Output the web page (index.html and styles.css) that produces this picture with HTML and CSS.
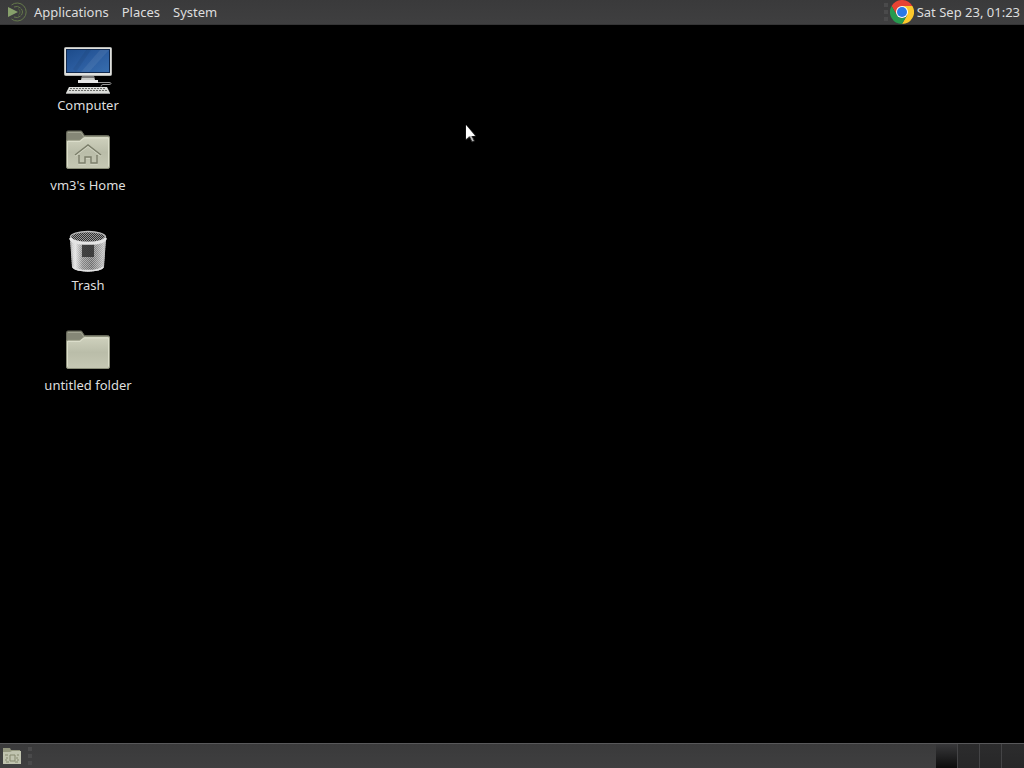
FILE: index.html
```html
<!DOCTYPE html>
<html lang="en">
<head>
<meta charset="utf-8">
<title>Desktop</title>
<link rel="stylesheet" href="styles.css">
</head>
<body>
<svg class="defs" aria-hidden="true">
  <defs>
    <linearGradient id="screen" x1="0" y1="0" x2="1" y2="1"><stop offset="0" stop-color="#1d4c8b"/><stop offset=".5" stop-color="#2b5c9f"/><stop offset="1" stop-color="#376dae"/></linearGradient>
    <linearGradient id="paper" x1="0" y1="0" x2="0" y2="1"><stop offset="0" stop-color="#d0d2be"/><stop offset=".5" stop-color="#babda9"/><stop offset="1" stop-color="#c6c8b4"/></linearGradient>
    <linearGradient id="metal" x1="0" y1="0" x2="1" y2="0"><stop offset="0" stop-color="#bbb"/><stop offset=".15" stop-color="#e2e2e2"/><stop offset=".35" stop-color="#888"/><stop offset=".6" stop-color="#6c6c6c"/><stop offset=".85" stop-color="#a5a5a5"/><stop offset="1" stop-color="#d0d0d0"/></linearGradient>
    <pattern id="mesh" width="2" height="2" patternUnits="userSpaceOnUse"><path d="M0 0h1v1H0zM1 1h1v1H1z" fill="#f2f2f2" fill-opacity=".42"/></pattern>
    <pattern id="darkmesh" width="2" height="2" patternUnits="userSpaceOnUse"><path d="M0 0h1v1H0zM1 1h1v1H1z" fill="#999"/></pattern>
    <g id="folder">
      <path d="M2.500 16V6.500q0-1.500 1.500-1.500h13.500l3 4.500h23q2 0 2 2V20h-43z" fill="#858776" stroke="#686a5b"/>
      <path d="M4 6.500h13l3 4.500h23" fill="none" stroke="#a2a492"/>
      <path d="M2.500 41V15.500q0-1.500 1.500-1.500h11.500l4-3q1-.5 2-.5h22.500q1.500 0 1.500 1.500v29q0 1.500-1.500 1.500h-40q-1.500 0-1.500-1.500z" fill="url(#paper)" stroke="#8b8e7a"/>
      <path d="M3.500 40.500v-25h12.500l4-3.500h24.500v28.500" fill="none" stroke="#dcdecb"/>
    </g>
  </defs>
</svg>
<div class="session">
  <header class="panel panel-top">
    <nav class="menus">
      <button class="menu menu-apps" type="button">
        <svg class="menu-logo" width="20" height="20" viewBox="0 0 20 20" aria-hidden="true">
          <g fill="none" stroke="#65794b"><path d="M4.500 3A9 9 0 1 1 4.500 17"/><path d="M7 5a6 6 0 0 1 8.500 5A6 6 0 0 1 7 15" stroke-dasharray="7 1"/><path d="M11 6.500a4 4 0 0 1 0 7" stroke="#52623e"/></g>
          <path d="M1 5l10 5-10 5z" fill="#87a06b"/>
        </svg>
        Applications
      </button>
      <button class="menu" type="button">Places</button>
      <button class="menu" type="button">System</button>
    </nav>
    <div class="tray">
      <span class="grip"></span>
      <button class="launcher" type="button" aria-label="Google Chrome">
        <svg width="24" height="24" viewBox="0 0 24 24" aria-hidden="true">
          <path d="M22.400 6A12 12 0 0 1 12 24l5.200-9L12 6z" fill="#fcc92c"/>
          <path d="M1.600 6A12 12 0 0 1 22.400 6H12L6.800 15z" fill="#e64333"/>
          <path d="M1.600 6l5.200 9A6 6 0 0 0 17.200 15L12 24A12 12 0 0 1 1.600 6z" fill="#269a4e"/>
          <circle cx="12" cy="12" r="6" fill="#fff"/><circle cx="12" cy="12" r="5" fill="#2878e6"/>
        </svg>
      </button>
      <button class="clock" type="button">Sat Sep 23, 01:23</button>
    </div>
  </header>

  <main class="desktop">
    <button class="item" type="button">
      <svg width="48" height="48" viewBox="0 0 48 48" aria-hidden="true">
        <path d="M18 30h12l1 4H17z" fill="#c9cbc8"/><path d="M18 30h12v2H18z" fill="#777"/><path d="M14 34h20v3H14z" fill="#e6e6e6"/>
        <rect x=".5" y="1.500" width="47" height="28" rx="1" fill="#dfe0dd" stroke="#b5b6b3"/>
        <rect x="2" y="3" width="44" height="24" fill="#10284d"/>
        <rect x="3" y="4" width="42" height="22" fill="url(#screen)"/>
        <path d="M17 26L36 4h9L25 26z" fill="#fff" fill-opacity=".07"/><path d="M9 23L22 4h5L12 26z" fill="#000" fill-opacity=".06"/>
        <path d="M34 36.500h11q2 0 2 1t-2 1h-6q-2 0-2 2" fill="none" stroke="#999"/>
        <path d="M5 41h38l3 6H2z" fill="#dcddda"/>
        <path d="M6 42.500h36M5 44.500h38" stroke="#6b6c69" stroke-dasharray="2 1"/><path d="M2 47.500h44" stroke="#999"/>
      </svg>
      <span class="label">Computer</span>
    </button>
    <button class="item" type="button">
      <svg width="48" height="48" viewBox="0 0 48 48" aria-hidden="true">
        <use href="#folder"/>
        <g fill="none" stroke-width="1.500"><path d="M11 30l13-10 13 10M15 30v8h6v-6h6v6h6v-8" stroke="#d6d8c6"/><path d="M11 29l13-10 13 10M15 29v8h6v-6h6v6h6v-8" stroke="#7b7e6a"/></g>
      </svg>
      <span class="label">vm3's Home</span>
    </button>
    <button class="item" type="button">
      <svg width="48" height="48" viewBox="0 0 48 48" aria-hidden="true">
        <path d="M6 12h36l-2 29c-2 6-30 6-32 0z" fill="url(#metal)"/>
        <path d="M6 12h36l-2 29c-2 6-30 6-32 0z" fill="url(#mesh)"/>
        <path d="M18 18h12v13H18z" fill="#2a2a2a" fill-opacity=".8"/>
        <path d="M7 16l2 25c3 5 27 5 30 0l2-25" fill="none" stroke="#bbb"/>
        <path d="M9 41c4 5 26 5 30 0" fill="none" stroke="#e2e2e2" stroke-width="2"/>
        <ellipse cx="24" cy="11" rx="17.500" ry="5.500" fill="#303030"/><ellipse cx="24" cy="11" rx="17" ry="5" fill="url(#darkmesh)"/>
        <ellipse cx="24" cy="11" rx="17.500" ry="5.500" fill="none" stroke="#bbb" stroke-width="1.500"/>
        <path d="M6.500 12c1 7 34 7 35 0" fill="none" stroke="#e4e4e4" stroke-width="3"/>
      </svg>
      <span class="label">Trash</span>
    </button>
    <button class="item" type="button">
      <svg width="48" height="48" viewBox="0 0 48 48" aria-hidden="true"><use href="#folder"/></svg>
      <span class="label">untitled folder</span>
    </button>
    <svg class="pointer" width="12" height="19" viewBox="0 0 12 19" aria-hidden="true"><path d="M1 1v15l3.500-3 2.500 5 2.500-1-2.500-5h4z" fill="#bbb" stroke="#222"/><path d="M1 1v14l3-3h6z" fill="#fff"/></svg>
  </main>

  <footer class="panel panel-bottom">
    <button class="show-desktop" type="button" aria-label="Show desktop">
      <svg width="20" height="20" viewBox="0 0 20 20" aria-hidden="true">
        <path d="M1 2h7l1 2h9v4H1z" fill="#94977f"/><path d="M1 6h7l2-1h9v13H1z" fill="#c0c3af"/>
        <path d="M8 9h5v6H8z" fill="none" stroke="#85886f"/><path d="M3 9h3M3 14h2M15 9h2M15 14h2M5 11v2M15 11v2M4 16h3M13 16h3" stroke="#85886f"/>
      </svg>
    </button>
    <span class="grip"></span>
    <div class="workspaces">
      <button class="workspace workspace-active" type="button" aria-label="Workspace 1"></button>
      <button class="workspace" type="button" aria-label="Workspace 2"></button>
      <button class="workspace" type="button" aria-label="Workspace 3"></button>
      <button class="workspace" type="button" aria-label="Workspace 4"></button>
    </div>
  </footer>
</div>
</body>
</html>
```
FILE: styles.css
```css
* { box-sizing: border-box; }

body {
  margin: 0;
  background: #000;
  color: #dedede;
  font: 13px/20px "Noto Sans", sans-serif;
}

button {
  margin: 0;
  padding: 0;
  border: 0;
  background: none;
  color: inherit;
  font: inherit;
}

svg { display: block; flex: none; }

.defs { position: absolute; width: 0; height: 0; }

.session {
  display: flex;
  flex-direction: column;
  min-height: 100vh;
}

.panel {
  display: flex;
  background: linear-gradient(#3a3a3b, #3f3f40);
}

.panel-top {
  justify-content: space-between;
  min-height: 25px;
  border-bottom: 1px solid #343435;
}

.menus { display: flex; padding-left: 7px; gap: 13px; }
.menu { display: flex; align-items: center; }
.menu-apps { gap: 7px; }

.tray { display: flex; align-items: center; padding-right: 4px; }
.launcher { margin: 0 3px 0 2px; }

.grip {
  align-self: center;
  width: 4px;
  height: 18px;
  background: repeating-linear-gradient(#4a4a4b 0 4px, transparent 4px 7px);
}

.desktop {
  position: relative;
  flex: 1;
  display: grid;
  grid-template-rows: 80px 100px 100px 100px;
  justify-content: start;
  align-items: start;
  padding: 21px 28px;
}

.item {
  display: flex;
  flex-direction: column;
  align-items: center;
  width: 120px;
}

.label { line-height: 22px; }

.pointer { position: absolute; left: 465px; top: 99px; }

.panel-bottom {
  min-height: 25px;
  border-top: 1px solid #58585a;
}

.show-desktop { margin: 0 6px 0 2px; }

.workspaces {
  display: grid;
  grid-template-columns: repeat(4, 22px);
  margin-left: auto;
}

.workspace {
  border-right: 1px solid #444446;
  background: linear-gradient(#2c2c2d, #272728);
}

.workspace:last-child { border-right: 0; }
.workspace-active { background: linear-gradient(#38383a, #0c0c0c); }
```
